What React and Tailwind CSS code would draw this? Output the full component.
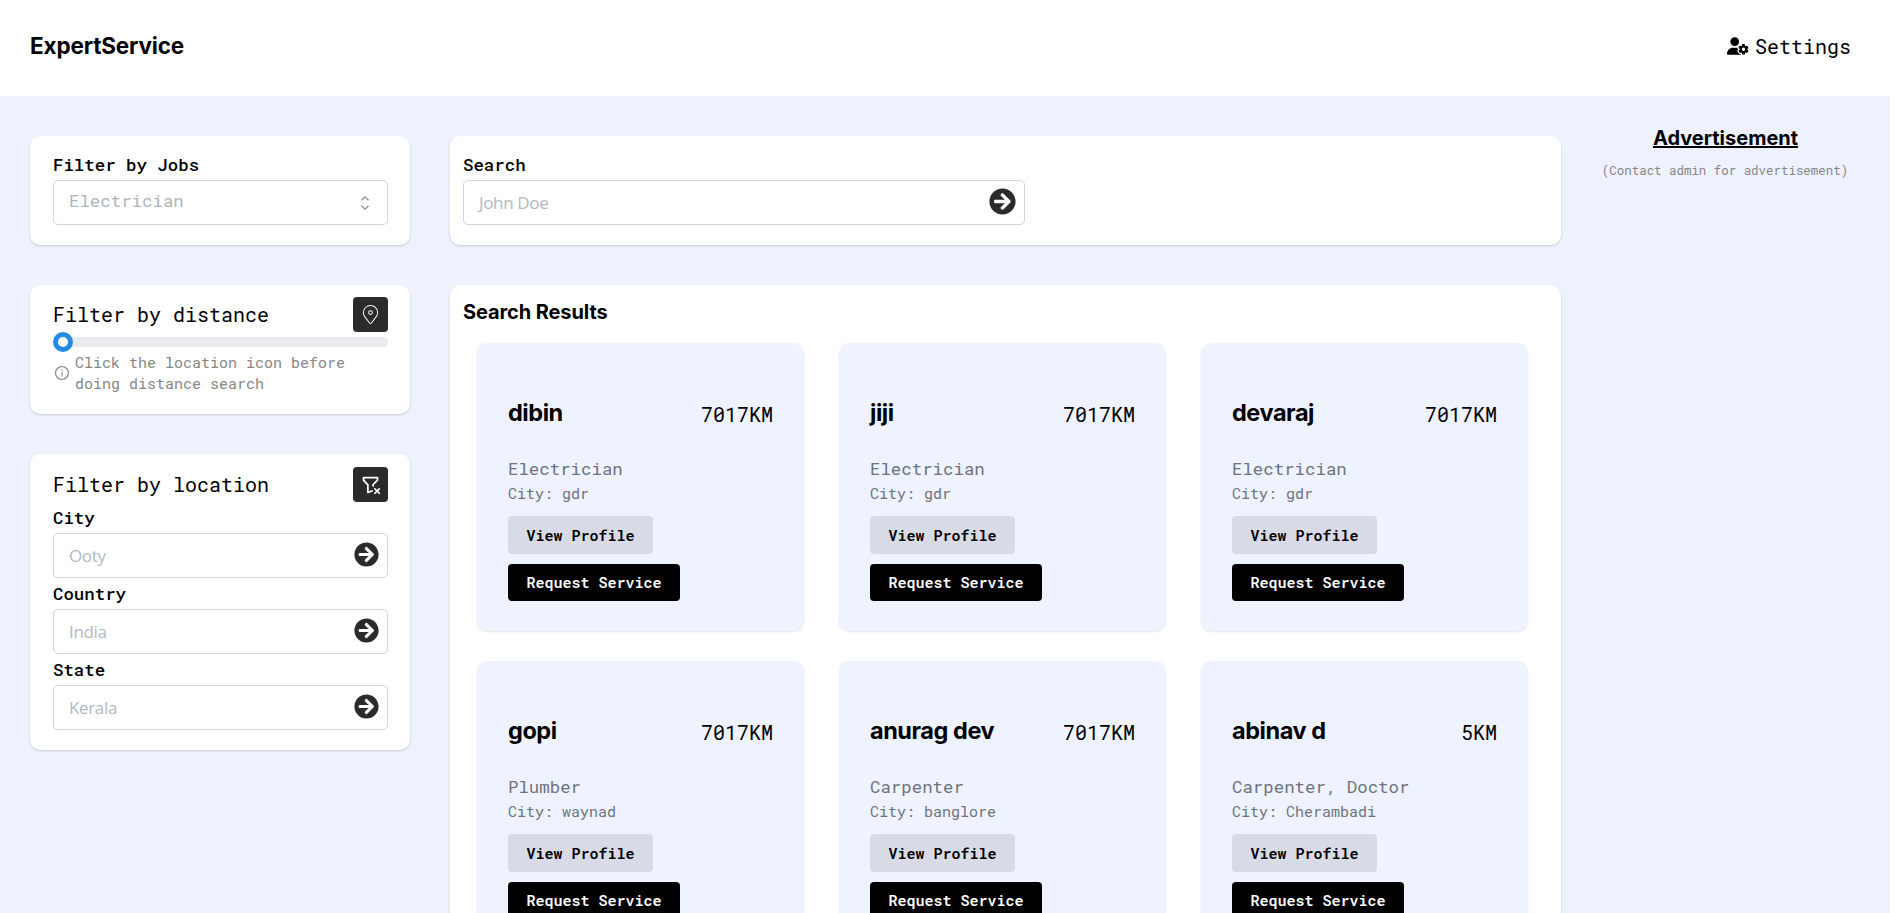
import { FaArrowCircleRight } from "react-icons/fa";
import { FaUserGear } from "react-icons/fa6";
import { TbFilterX } from "react-icons/tb";
import { CiLocationOn } from "react-icons/ci";
import { AiOutlineInfoCircle } from "react-icons/ai";

const experts = [
  { name: "dibin", distance: "7017KM", jobs: "Electrician", city: "gdr" },
  { name: "jiji", distance: "7017KM", jobs: "Electrician", city: "gdr" },
  { name: "devaraj", distance: "7017KM", jobs: "Electrician", city: "gdr" },
  { name: "gopi", distance: "7017KM", jobs: "Plumber", city: "waynad" },
  { name: "anurag dev", distance: "7017KM", jobs: "Carpenter", city: "banglore" },
  { name: "abinav d", distance: "5KM", jobs: "Carpenter, Doctor", city: "Cherambadi" },
];

function Card({ className, children }) {
  return (
    <section className={`rounded-[10px] bg-white shadow-[0_1px_3px_rgba(0,0,0,0.07),0_1px_2px_rgba(0,0,0,0.1)] ${className}`}>
      {children}
    </section>
  );
}

function Field({ label, placeholder, iconSize = 25 }) {
  return (
    <div>
      <label className="block h-7 pt-1 text-[17.4px] leading-6 font-medium">{label}</label>
      <div className="mt-[3px] flex h-[45px] items-center justify-between rounded-[5px] border border-[#ced4da] bg-white pr-2 pl-[15px]">
        <span className="pt-px font-['Open_Sans',sans-serif] text-[17px] font-normal tracking-[-0.35px] text-[#b3bac1]">{placeholder}</span>
        <FaArrowCircleRight size={iconSize} className="-mt-[3px] text-[#2b2b2b]" />
      </div>
    </div>
  );
}

function JobSelect() {
  return (
    <div>
      <label className="block h-6 pt-[2px] text-[17.4px] leading-6 font-medium">Filter by Jobs</label>
      <div className="mt-[5px] flex h-[45px] items-center justify-between rounded-[5px] border border-[#ced4da] bg-white pr-[17px] pl-[15px]">
        <span className="-mt-[3px] text-[17.4px] text-[#adb5bd]">Electrician</span>
        <svg width="10" height="16" viewBox="0 0 10 16" fill="none" stroke="#868e96" strokeWidth="1.3">
          <path d="M1.5 5.3 5 1.8l3.5 3.5M1.5 10.7 5 14.2l3.5-3.5" />
        </svg>
      </div>
    </div>
  );
}

function IconButton({ children }) {
  return (
    <button className="flex size-[35px] items-center justify-center rounded-[4px] bg-[#2b2b2b] text-white">{children}</button>
  );
}

function ExpertCard({ expert }) {
  return (
    <article className="h-[288px] rounded-[10px] bg-[#eff3ff] px-[31px] pt-[52px] shadow-[0_1px_2px_rgba(0,0,0,0.1)]">
      <div className="flex h-9 items-center justify-between">
        <h3 className="font-[Inter] text-[23.5px] leading-9 font-bold tracking-[-0.45px]">{expert.name}</h3>
        <span className="pt-[2px] text-[20px] leading-8">{expert.distance}</span>
      </div>
      <p className="mt-[26px] text-[17.4px] leading-6 text-[#6b7280]">{expert.jobs}</p>
      <p className="mt-[2px] text-[15px] leading-[21px] text-[#6b7280]">City: {expert.city}</p>
      <div className="mt-3 flex flex-col items-start gap-[10px]">
        <button className="h-[38px] rounded-[4px] bg-[#d8dbe6] px-[18.5px] text-[15px] font-semibold">View Profile</button>
        <button className="h-[37px] rounded-[4px] bg-black px-[18.5px] text-[15px] font-semibold text-white">Request Service</button>
      </div>
    </article>
  );
}

export default function App() {
  return (
    <div className="h-[913px] overflow-hidden bg-white font-['Roboto_Mono',monospace] text-black">
      <header className="flex h-24 items-center justify-between bg-white pr-11 pl-[30px]">
        <h1 className="-mt-1 font-[Inter] text-[22.5px] font-bold tracking-[-0.15px]">ExpertService</h1>
        <div className="-mt-1 flex items-center gap-[6px]">
          <FaUserGear size={22} />
          <span className="text-[20px]">Settings</span>
        </div>
      </header>

      <main className="mr-[5px] flex h-[817px] items-start bg-[#eef2ff] pt-10 pl-[30px]">
        <aside className="flex w-[380px] shrink-0 flex-col gap-10">
          <Card className="h-[109px] pt-[15px] pr-[22px] pl-[23px]">
            <JobSelect />
          </Card>

          <Card className="h-[129px] pt-3 pr-[22px] pl-[23px]">
            <div className="flex items-center justify-between">
              <h2 className="-mt-[2px] text-[20px]">Filter by distance</h2>
              <IconButton>
                <CiLocationOn size={23} />
              </IconButton>
            </div>
            <div className="flex h-5 items-center">
              <span className="z-10 size-5 shrink-0 rounded-full border-[5px] border-[#228be6] bg-white" />
              <span className="-ml-2 h-[10px] flex-1 rounded-r-full bg-[#e9ecef]" />
            </div>
            <div className="flex items-center gap-[5px] pl-px text-[15px] leading-[21px] text-[#868686]">
              <AiOutlineInfoCircle size={16} className="shrink-0" />
              <p className="w-[290px]">Click the location icon before doing distance search</p>
            </div>
          </Card>

          <Card className="h-[296px] pt-[13px] pr-[22px] pl-[23px]">
            <div className="flex items-center justify-between">
              <h2 className="-mt-[2px] text-[20px]">Filter by location</h2>
              <IconButton>
                <TbFilterX size={21} />
              </IconButton>
            </div>
            <div className="flex flex-col">
              <Field label="City" placeholder="Ooty" />
              <Field label="Country" placeholder="India" />
              <Field label="State" placeholder="Kerala" />
            </div>
          </Card>
        </aside>

        <div className="ml-10 flex w-[1111px] shrink-0 flex-col gap-10">
          <Card className="h-[109px] px-[13px] pt-[13px]">
            <div className="w-[562px]">
              <Field label="Search" placeholder="John Doe" iconSize={27} />
            </div>
          </Card>
          <Card className="h-[700px] px-[13px] pt-3">
            <h2 className="font-[Inter] text-[20px] leading-[30px] font-bold tracking-[-0.1px]">Search Results</h2>
            <div className="mt-4 ml-[14px] grid grid-cols-[repeat(3,327px)] gap-x-[35px] gap-y-[30px]">
              {experts.map((expert) => (
                <ExpertCard key={expert.name} expert={expert} />
              ))}
            </div>
          </Card>
        </div>

        <aside className="-mt-[13px] flex flex-1 flex-col items-center">
          <h2 className="font-[Inter] text-[20px] leading-[30px] font-bold underline">Advertisement</h2>
          <p className="mt-[7px] -ml-px text-[12.45px] leading-5 text-[#868686]">(Contact admin for advertisement)</p>
        </aside>
      </main>
    </div>
  );
}
